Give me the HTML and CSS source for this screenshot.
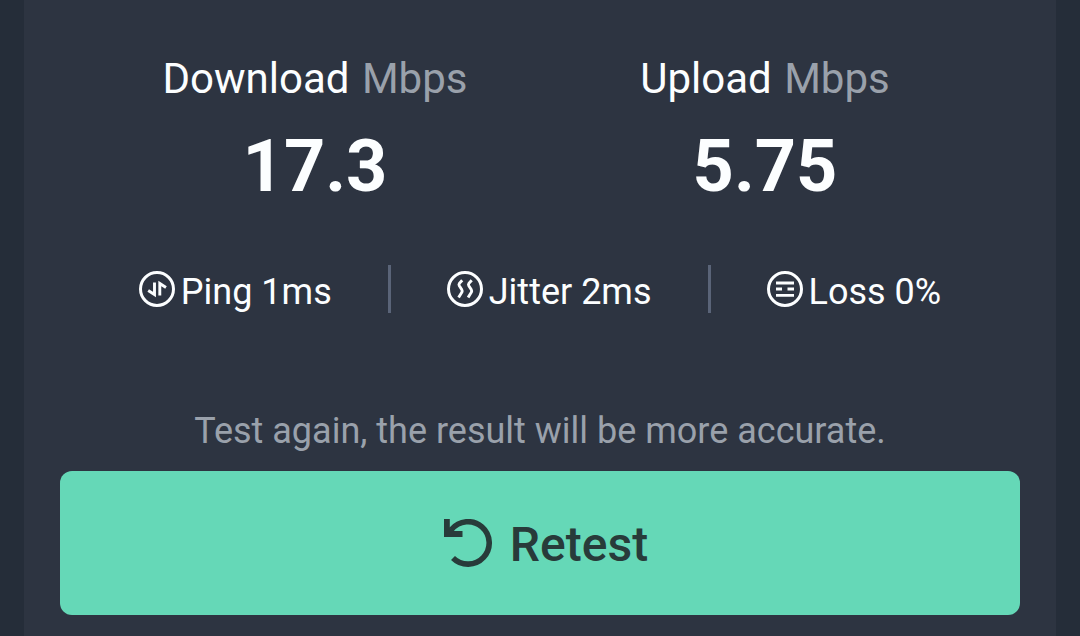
FILE: index.html
```
<!DOCTYPE html>
<html lang="en">
<head>
  <meta charset="UTF-8" />
  <meta name="viewport" content="width=device-width, initial-scale=1.0"/>
  <title>Speed Test Result</title>
  <link rel="stylesheet" href="styles.css">
</head>
<body>
  <main class="panel">
    <div class="speeds">
      <div class="speed">
        <div class="speed-label">Download <span class="unit">Mbps</span></div>
        <div class="speed-value">17.3</div>
      </div>
      <div class="speed">
        <div class="speed-label">Upload <span class="unit">Mbps</span></div>
        <div class="speed-value">5.75</div>
      </div>
    </div>

    <div class="metrics">
      <div class="metric">
        <svg class="metric-icon" viewBox="0 0 36 36" aria-hidden="true">
          <circle cx="18" cy="18" r="16.5" stroke-width="3"/>
          <path d="M15.5 11.5V23.5L9.2 19.5M20.8 24.5V12.5L27 16.5" stroke-width="2.9"/>
        </svg>
        <span class="metric-text">Ping 1ms</span>
      </div>
      <div class="divider"></div>
      <div class="metric">
        <svg class="metric-icon" viewBox="0 0 36 36" aria-hidden="true">
          <circle cx="18" cy="18" r="16.5" stroke-width="3"/>
          <path d="M15.2 9.3L12.4 12.4Q11.6 13.5 12.3 14.7L14.7 18.4Q15.5 19.8 14.9 21.2L11.6 26.5M24.7 9.3L21.9 12.4Q21.1 13.5 21.8 14.7L24.2 18.4Q25 19.8 24.4 21.2L21.1 26.5" stroke-width="2.9"/>
        </svg>
        <span class="metric-text">Jitter 2ms</span>
      </div>
      <div class="divider"></div>
      <div class="metric">
        <svg class="metric-icon" viewBox="0 0 36 36" aria-hidden="true">
          <circle cx="18" cy="18" r="16.5" stroke-width="3"/>
          <path d="M9 12H27M9 18H15M20.5 18H27M9 24.4H27" stroke-width="2.8"/>
        </svg>
        <span class="metric-text">Loss 0%</span>
      </div>
    </div>

    <p class="hint">Test again, the result will be more accurate.</p>
    <button class="retest" type="button">
      <svg class="retest-icon" viewBox="0 0 48 48" aria-hidden="true">
        <path class="arc" d="M7.5 10.6A21.2 21.2 0 1 1 9 38.9"/>
        <path class="head" d="M0 0H5.8V8.5L10 12H18.5V18H0Z"/>
      </svg>
      <span class="retest-text">Retest</span>
    </button>
  </main>
</body>
</html>
```

FILE: styles.css
```
:root {
  --bg-color: #252d39;
  --panel-color: #2d3441;
  --text-color: #fcfeff;
  --muted-color: #9aa1ab;
  --line-color: #5a6478;
  --button-color: #65d8b7;
  --button-text: #283b3a;
}

* {
  box-sizing: border-box;
}

body {
  margin: 0;
  padding: 0 24px;
  background: var(--bg-color);
  color: var(--text-color);
  font-family: Roboto, sans-serif;
}

.panel {
  min-height: 100vh;
  padding: 54px 36px 20px;
  background: var(--panel-color);
}

.speeds {
  display: flex;
  padding: 0 30px;
}

.speed {
  flex: 1;
  text-align: center;
}

.speed-label {
  font-size: 42px;
  line-height: 50px;
}

.unit {
  margin-left: 2px;
  color: var(--muted-color);
}

.speed-value {
  margin-top: 21px;
  font-size: 72px;
  font-weight: 700;
  line-height: 84px;
}

.metrics {
  display: flex;
  justify-content: center;
  gap: 56px;
  margin-top: 56px;
}

.metric {
  display: flex;
  align-items: center;
  gap: 6px;
}

.metric-icon {
  width: 36px;
  height: 36px;
  fill: none;
  stroke: var(--text-color);
}

.metric-text {
  padding-top: 6px;
  font-size: 36px;
  line-height: 42px;
  white-space: nowrap;
}

.divider {
  width: 3px;
  height: 48px;
  background: var(--line-color);
}

.hint {
  margin: 97px 0 19px;
  color: var(--muted-color);
  font-size: 36px;
  line-height: 42px;
  text-align: center;
}

.retest {
  display: flex;
  align-items: center;
  justify-content: center;
  gap: 18px;
  width: 100%;
  height: 144px;
  padding: 0 0 0 12px;
  border: none;
  border-radius: 12px;
  background: var(--button-color);
  color: var(--button-text);
  font-family: inherit;
  font-size: 48px;
  font-weight: 500;
  line-height: 56px;
  cursor: pointer;
}

.retest-icon {
  width: 48px;
  height: 48px;
}

.retest-text {
  padding-top: 4px;
}

.arc {
  fill: none;
  stroke: var(--button-text);
  stroke-width: 5.6;
}

.head {
  fill: var(--button-text);
}
```
